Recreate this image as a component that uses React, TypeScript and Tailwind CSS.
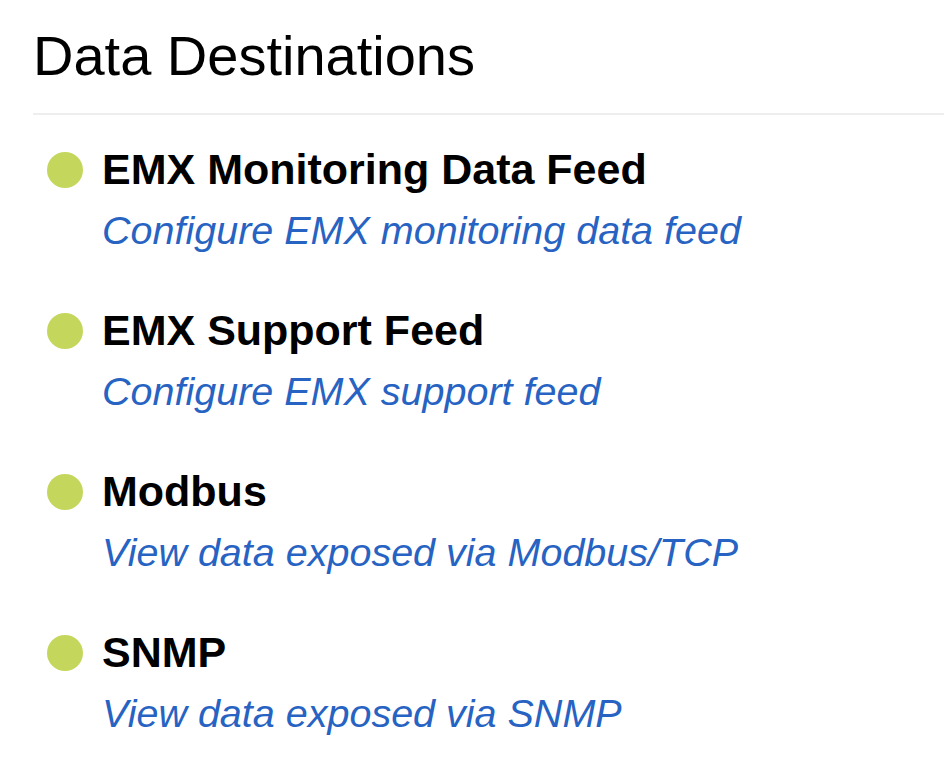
import React from 'react';

interface Destination {
    name: string;
    description: string;
}

const destinations: Destination[] = [
    { name: 'EMX Monitoring Data Feed', description: 'Configure EMX monitoring data feed' },
    { name: 'EMX Support Feed', description: 'Configure EMX support feed' },
    { name: 'Modbus', description: 'View data exposed via Modbus/TCP' },
    { name: 'SNMP', description: 'View data exposed via SNMP' },
];

const App: React.FC = () => {
    return (
        <div className="min-h-screen bg-white font-['Liberation_Sans',Arial,sans-serif] pt-[24px]">
            <h1 className="pl-[33px] text-[56px] leading-[64px] text-black">Data Destinations</h1>
            <div className="ml-[33px] mt-[25px] h-[2px] bg-[#eeeeee]" />

            <ul className="mt-[30px] pl-[47px] flex flex-col gap-[52px]">
                {destinations.map((d) => (
                    <li key={d.name} className="flex items-start">
                        {/* status dot */}
                        <span className="mt-[7px] w-[36px] h-[36px] rounded-full bg-[#c4d75c] shrink-0" />
                        <div className="ml-[19px]">
                            <div className="text-[43px] leading-[48px] font-bold text-black">{d.name}</div>
                            <a href="#" className="block mt-[13px] text-[39.5px] leading-[48px] italic text-[#2763c2]">
                                {d.description}
                            </a>
                        </div>
                    </li>
                ))}
            </ul>
        </div>
    );
};

export default App;
